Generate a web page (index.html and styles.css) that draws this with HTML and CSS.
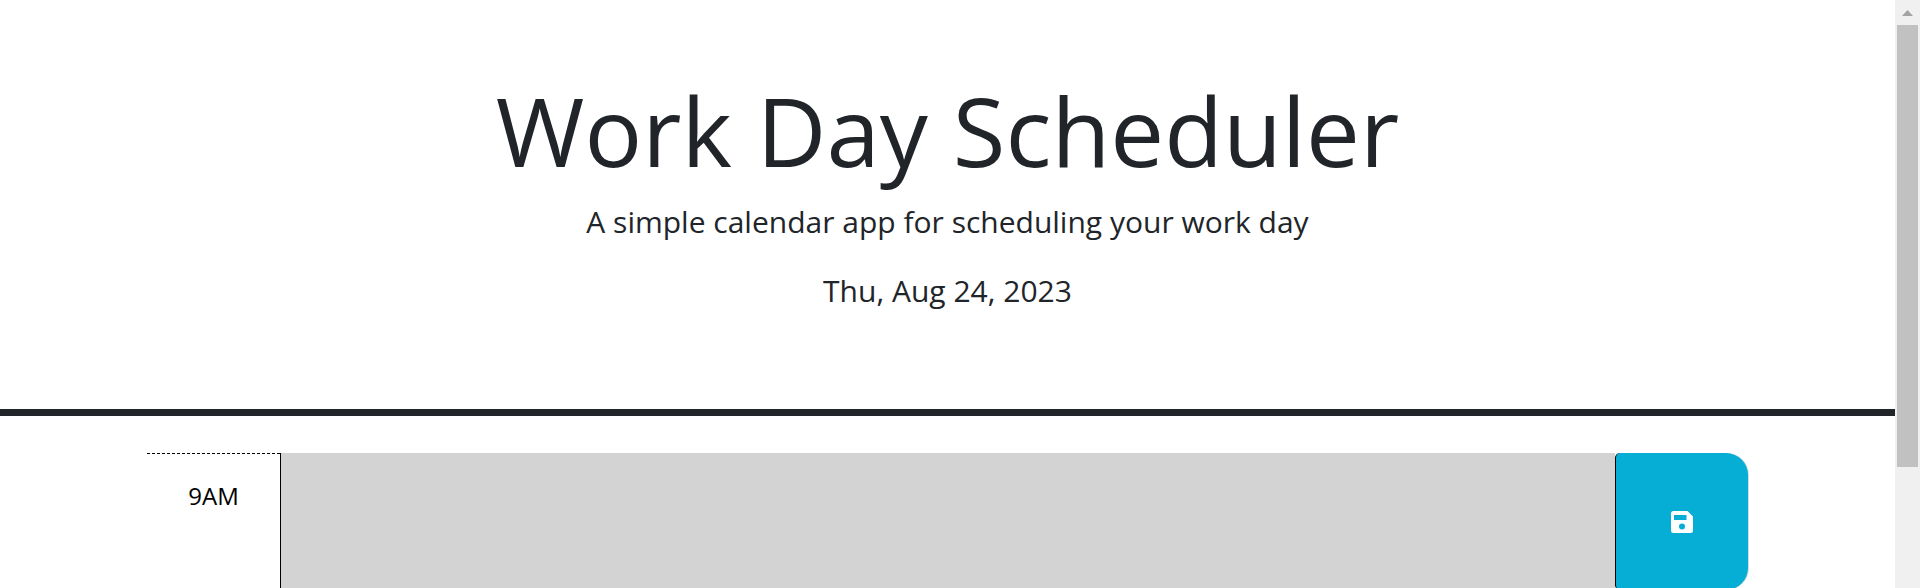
FILE: index.html
```html
<!DOCTYPE html>
<html lang="en">
<head>
<meta charset="utf-8">
<title>Work Day Scheduler</title>
<link rel="stylesheet" href="styles.css">
</head>
<body>
<div class="page">
  <header class="header">
    <h1 class="title">Work Day Scheduler</h1>
    <p class="lead">A simple calendar app for scheduling your work day</p>
    <p class="date">Thu, Aug 24, 2023</p>
  </header>
  <main class="schedule">
    <div class="time-block">
      <div class="hour">9AM</div>
      <div class="description"></div>
      <button class="save" aria-label="save">
        <svg class="icon" viewBox="0 0 22 22"><path fill="#fff" fill-rule="evenodd" d="M2.5 0H16.5L22 5.5V19.5Q22 22 19.5 22H2.500Q0 22 0 19.500V2.500Q0 0 2.500 0ZM3 4V9H15.500V4ZM11 12.500A3 3 0 1 0 11 18.500A3 3 0 1 0 11 12.500Z"/></svg>
      </button>
    </div>
  </main>
</div>
<div class="scrollbar">
  <svg class="arrow" viewBox="0 0 11 6"><path fill="#a3a3a3" d="M0 6L5.500 0L11 6Z"/></svg>
  <div class="thumb"></div>
</div>
</body>
</html>
```
FILE: styles.css
```css
* { box-sizing: border-box; }
body {
  margin: 0;
  height: 588px;
  overflow: hidden;
  display: flex;
  background: #fff;
  color: #212529;
  font-family: "Open Sans", sans-serif;
}
.page { width: 1895px; height: 588px; overflow: hidden; }
.header {
  height: 416px;
  padding-top: 72px;
  border-bottom: 7px solid #212529;
  text-align: center;
}
.title { margin: 0; font-size: 96px; line-height: 115px; font-weight: 400; }
.lead { margin: 12px 0 0; font-size: 30px; line-height: 45px; }
.date { margin: 24px 0 0; font-size: 30px; line-height: 45px; }
.schedule { padding: 37px 147px 0; }
.time-block {
  display: grid;
  grid-template-columns: 133px 1335px 133px;
  height: 137px;
}
.hour {
  /* 3px dashes with 2px gaps along the top edge */
  background: repeating-linear-gradient(90deg, #000 0 3px, transparent 3px 5px) top / 100% 1px no-repeat;
  padding-top: 26px;
  text-align: center;
  color: #000;
  font-size: 24px;
  line-height: 34px;
}
.description { background: #d3d3d3; border-left: 1px solid #000; }
.save {
  display: flex;
  align-items: center;
  justify-content: center;
  padding: 0;
  border: 0;
  border-left: 1px solid #000;
  border-radius: 5px 22px 22px 5px;
  background: #06aed5;
  box-shadow: 1px 0 0 #d9dcdd;
}
.icon { width: 22px; height: 22px; }
.scrollbar {
  width: 25px;
  height: 588px;
  padding: 10px 2px 0;
  display: flex;
  flex-direction: column;
  align-items: center;
  background: #f0f0f0;
}
.arrow { width: 11px; height: 6px; flex: none; }
.thumb { width: 21px; height: 442px; margin-top: 9px; background: #c1c1c1; }
```
